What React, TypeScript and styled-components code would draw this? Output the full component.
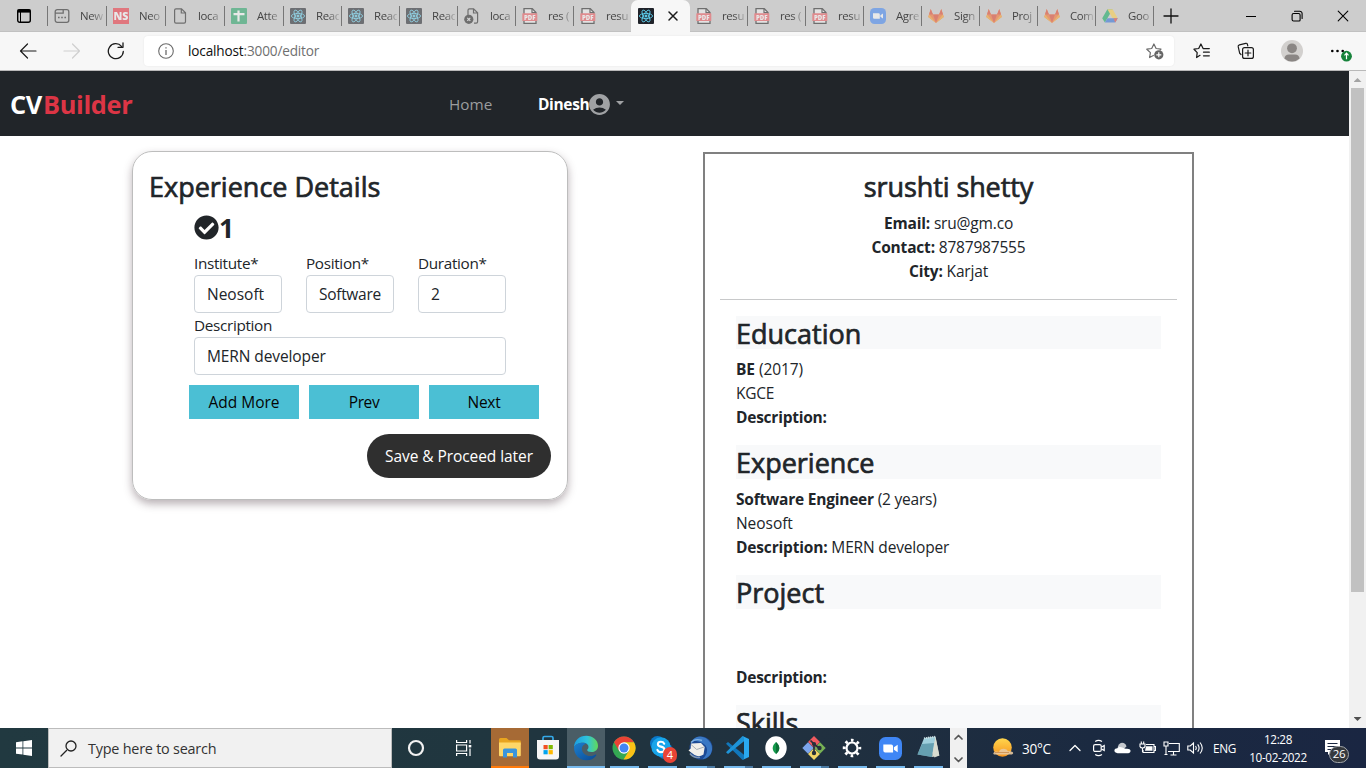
import React from 'react';
import styled, { createGlobalStyle, css } from 'styled-components';
import { MdAccountCircle } from 'react-icons/md';
import { FaCheckCircle } from 'react-icons/fa';

const GlobalStyle = createGlobalStyle`
  *, *::before, *::after { box-sizing: border-box; }
  html, body { margin: 0; background: #fff; }
  body { font-family: "Open Sans", "Noto Sans", sans-serif; color: #212529; overflow: hidden; }
  svg { display: block; flex: none; }
`;

/* ---------- window frame ---------- */

const Screen = styled.div`
  width: 1366px;
  height: 768px;
  display: flex;
  flex-direction: column;
  overflow: hidden;
`;

const TabStrip = styled.header`
  height: 32px;
  flex: none;
  display: flex;
  background: #cdcdcd;
  box-shadow: inset 0 -1px 0 #c1c1c1;
`;

const TabActions = styled.div`
  width: 48px;
  height: 20px;
  margin-top: 6px;
  padding: 2px 0 0 16px;
  border-right: 1px solid #767676;
`;

const Tab = styled.div<{ $width: number; $last?: boolean }>`
  width: ${p => p.$width}px;
  height: 20px;
  margin-top: 6px;
  padding: 2px 0 0 6px;
  display: flex;
  gap: 10px;
  border-right: 1px solid ${p => (p.$last ? 'transparent' : '#767676')};
`;

const TabIcon = styled.span`
  width: 16px;
  height: 16px;
  flex: none;
  opacity: 0.55;
`;

const TabTitle = styled.span`
  width: 23px;
  overflow: hidden;
  white-space: nowrap;
  font-size: 11.4px;
  line-height: 16px;
  letter-spacing: -0.35px;
  color: #454545;
  mask-image: linear-gradient(90deg, #000 50%, rgba(0, 0, 0, 0.2) 100%);
`;

const ActiveTab = styled.div`
  width: 59px;
  height: 32px;
  display: flex;
  align-items: center;
  gap: 13px;
  padding: 0 0 0 7px;
  background: #f7f7f7;
  border-radius: 7px 7px 0 0;
`;

const NewTab = styled.div`
  padding: 8px 0 0 9px;
`;

const WindowButtons = styled.div`
  margin-left: auto;
  display: flex;
  align-items: center;
`;

const WindowButton = styled.div`
  width: 46px;
  height: 32px;
  display: grid;
  place-items: center;
`;

const Toolbar = styled.div`
  height: 39px;
  flex: none;
  display: flex;
  align-items: center;
  padding: 0 14px 0 16px;
  background: #f7f7f7;
  border-bottom: 1px solid #b9b9b9;
`;

const NavButton = styled.div`
  width: 44px;
  height: 32px;
  padding-left: 3px;
  display: flex;
  align-items: center;
`;

const AddressBar = styled.div`
  width: 1030px;
  height: 30px;
  margin-left: -4px;
  padding: 0 10px 0 14px;
  display: flex;
  align-items: center;
  background: #fff;
  border-radius: 4px;
  box-shadow: 0 0 2px rgba(0, 0, 0, 0.08);
`;

const Url = styled.span`
  flex: 1;
  margin-left: 14px;
  font-size: 13.6px;
  line-height: 20px;
  letter-spacing: -0.16px;
  color: #6f6f6f;
`;

const Host = styled.span`
  color: #101010;
`;

const ToolbarActions = styled.div`
  flex: 1;
  display: flex;
  align-items: center;
  justify-content: space-between;
  padding-left: 19px;
`;

/* ---------- page ---------- */

const Viewport = styled.div`
  height: 657px;
  flex: none;
  display: flex;
  overflow: hidden;
`;

const Page = styled.div`
  width: 1349px;
  overflow: hidden;
`;

const Navbar = styled.nav`
  height: 65px;
  display: flex;
  align-items: center;
  padding: 1px 0 0 10px;
  background: #212529;
`;

const Brand = styled.div`
  width: 439px;
  font-size: 25.4px;
  font-weight: 700;
  line-height: 36px;
  letter-spacing: -0.35px;
  color: #fff;
`;

const BrandAccent = styled.span`
  margin-left: 1px;
  color: #dc3545;
`;

const NavLink = styled.a`
  width: 89px;
  font-size: 15.3px;
  line-height: 24px;
  color: #9b9d9e;
`;

const UserMenu = styled.div`
  display: flex;
  align-items: center;
  color: #a0a2a4;
`;

const UserName = styled.b`
  width: 49px;
  white-space: nowrap;
  font-size: 15.5px;
  line-height: 24px;
  letter-spacing: -0.35px;
  color: #fff;
`;

const Caret = styled.i`
  margin: -2px 0 0 4px;
  border: 4.5px solid transparent;
  border-top-color: currentColor;
  border-bottom: 0;
`;

const Columns = styled.main`
  display: flex;
  align-items: flex-start;
  padding: 15px 0 0 132px;
`;

const Card = styled.section`
  width: 436px;
  height: 349px;
  padding: 18px 16px 0;
  border: 1px solid #bdbdbd;
  border-radius: 20px;
  box-shadow: 0 4px 9px rgba(70, 50, 60, 0.38);
`;

const heading = css`
  margin: 0 0 8px;
  font-size: 27px;
  font-weight: 400;
  line-height: 33.6px;
  white-space: nowrap;
  -webkit-text-stroke: 0.7px currentColor;
`;

const Title = styled.h2`
  ${heading}
  margin-bottom: 7px;
`;

const FormBody = styled.div`
  margin: 0 45px;
`;

const StepRow = styled.div`
  height: 34px;
  display: flex;
  align-items: center;
  margin-bottom: 6px;
`;

const StepNumber = styled.b`
  font-size: 26.5px;
  line-height: 34px;
`;

const FieldRow = styled.div`
  display: grid;
  grid-template-columns: repeat(3, 88px);
  column-gap: 24px;
`;

const Field = styled.label`
  display: block;
  font-size: 15.3px;
  line-height: 24px;
  letter-spacing: -0.33px;
`;

const Input = styled.div<{ $spacing?: number }>`
  height: 38px;
  padding: 0 12px;
  border: 1px solid #ced4da;
  border-radius: 4px;
  font-size: 15.5px;
  line-height: 37px;
  letter-spacing: ${p => p.$spacing ?? -0.1}px;
  overflow: hidden;
  white-space: nowrap;
`;

const ButtonRow = styled.div`
  display: flex;
  gap: 10px;
  margin: 10px 0 0 40px;
`;

const StepButton = styled.button<{ $spacing?: number }>`
  width: 110px;
  height: 34px;
  padding: 0;
  border: 0;
  background: #4bbfd4;
  font: 400 15.5px/34px "Open Sans", "Noto Sans", sans-serif;
  letter-spacing: ${p => p.$spacing ?? 0}px;
  color: #050505;
`;

const SaveButton = styled.button`
  display: block;
  width: 184px;
  height: 44px;
  margin: 15px 0 0 auto;
  padding: 0;
  border: 0;
  border-radius: 22px;
  background: #2f2f2f;
  font: 400 15.5px/44px "Open Sans", "Noto Sans", sans-serif;
  letter-spacing: -0.07px;
  color: #fff;
`;

const Resume = styled.article`
  width: 491px;
  height: 900px;
  margin: 1px 0 0 135px;
  padding: 16px 15px;
  border: 2px solid #808080;
`;

const Person = styled.div`
  padding-bottom: 16px;
  border-bottom: 1px solid #c8c9ca;
  text-align: center;
`;

const PersonName = styled.h2`
  ${heading}
  margin-bottom: 7.2px;
  letter-spacing: -0.1px;
`;

const Line = styled.div<{ $spacing?: number }>`
  height: 24px;
  font-size: 15.5px;
  line-height: 24px;
  letter-spacing: ${p => p.$spacing ?? -0.17}px;
  white-space: nowrap;
`;

const Section = styled.section`
  margin: 16px 16px 0;
`;

const SectionTitle = styled.h2`
  ${heading}
  background: #f8f9fa;
  line-height: 36px;
  height: 33.6px;
`;

const Scrollbar = styled.div`
  width: 17px;
  height: 657px;
  display: flex;
  flex-direction: column;
  align-items: center;
  background: #f1f1f1;
`;

const Thumb = styled.div`
  width: 13px;
  height: 504px;
  margin-bottom: auto;
  background: #c1c1c1;
`;

const ScrollArrow = styled.i<{ $down?: boolean }>`
  width: 8px;
  height: 4px;
  margin: ${p => (p.$down ? '0 0 7px' : '7px 0 6px')};
  clip-path: ${p => (p.$down ? 'polygon(0 0, 100% 0, 50% 100%)' : 'polygon(50% 0, 100% 100%, 0 100%)')};
  background: ${p => (p.$down ? '#505050' : '#a3a3a3')};
`;

/* ---------- taskbar ---------- */

const Taskbar = styled.footer`
  height: 40px;
  flex: none;
  display: flex;
  background: linear-gradient(90deg, #213940 0%, #20363f 35%, #20303f 60%, #1b2a41 80%, #1a2642 100%);
  color: #fff;
`;

const SystemButton = styled.div`
  width: 48px;
  display: grid;
  place-items: center;
`;

const SearchBox = styled.div`
  width: 344px;
  display: flex;
  align-items: center;
  gap: 11px;
  padding-left: 11px;
  background: #f1f1f1;
  border: 1px solid #bcbcbc;
  font-size: 14.4px;
  letter-spacing: -0.22px;
  color: #333;
`;

const Apps = styled.div`
  display: flex;
  padding: 0 3px;
`;

const appTones = {
  idle: 'transparent',
  orange: '#a66a35',
  light: '#4a5d66',
};

const AppButton = styled.div<{ $tone?: keyof typeof appTones; $line?: string; $stacked?: boolean }>`
  position: relative;
  width: 38px;
  display: grid;
  place-items: center;
  background: ${p => appTones[p.$tone ?? 'idle']};
  &::after {
    content: "";
    position: absolute;
    left: ${p => (p.$tone ? 0 : 5)}px;
    right: ${p => (p.$tone ? 0 : 4)}px;
    bottom: 0;
    height: 2px;
    background: ${p => (p.$stacked ? 'linear-gradient(90deg, #76b9ed 71%, #4b7aa3 71%)' : p.$line ?? '#76b9ed')};
  }
`;

const CountBadge = styled.span`
  position: absolute;
  right: 4px;
  bottom: 5px;
  width: 14px;
  height: 16px;
  border-radius: 8px;
  background: #ea4335;
  font-size: 11px;
  line-height: 15px;
  text-align: center;
`;

const Overflow = styled.div`
  width: 17px;
  display: flex;
  flex-direction: column;
  justify-content: space-between;
  align-items: center;
  padding: 6px 0 5px;
  background: #f0f0f0;
`;

const Tray = styled.div`
  flex: 1;
  display: flex;
  align-items: center;
  padding-left: 25px;
`;

const TrayItem = styled.div<{ $width: number }>`
  width: ${p => p.$width}px;
  flex: none;
`;

const TrayText = styled.div<{ $width: number; $size: number; $spacing: number }>`
  width: ${p => p.$width}px;
  flex: none;
  font-size: ${p => p.$size}px;
  letter-spacing: ${p => p.$spacing}px;
  white-space: nowrap;
`;

const Clock = styled.div`
  width: 58px;
  flex: none;
  display: flex;
  flex-direction: column;
  align-items: center;
  font-size: 11.7px;
  line-height: 18px;
  letter-spacing: -0.35px;
  white-space: nowrap;
`;

const Notifications = styled.div`
  position: relative;
  margin: -1px 0 0 17px;
`;

const NotificationCount = styled.span`
  position: absolute;
  left: 5px;
  top: 6px;
  width: 20px;
  height: 17px;
  border: 1px solid #a2a6aa;
  border-radius: 9px;
  background: #35393e;
  font-size: 11.5px;
  line-height: 14px;
  letter-spacing: -0.3px;
  text-align: center;
`;

/* ---------- browser icons ---------- */

const Stroke = ({ w = 16, h = w, box, d, color = '#1b1b1b', sw = 1.2 }: {
  w?: number; h?: number; box?: string; d: string; color?: string; sw?: number;
}) => (
  <svg width={w} height={h} viewBox={box ?? `0 0 ${w} ${h}`} fill="none" stroke={color} strokeWidth={sw} strokeLinecap="round" strokeLinejoin="round">
    <path d={d} />
  </svg>
);

const TabActionsIcon = () => (
  <svg width="16" height="16" fill="none" stroke="#000" strokeWidth="1.4">
    <rect x="1.7" y="1.7" width="12.6" height="12.6" rx="2" />
    <path d="M4.500 4v10" strokeWidth="1" />
    <path d="M1.500 3h13" strokeWidth="3.2" />
  </svg>
);

const NewPageIcon = () => (
  <svg width="16" height="16" fill="none" stroke="#222" strokeWidth="1.3">
    <path d="M3.2 1.7h9.6a2 2 0 0 1 2 2v8.6a2 2 0 0 1-2 2H3.2a2 2 0 0 1-2-2V3.7a2 2 0 0 1 2-2ZM1.5 5.2H9.2V2" />
    <path d="M4 9.5h1.600M7.200 9.5h1.600M10.400 9.5H12" strokeWidth="1.6" />
  </svg>
);

const NsIcon = () => (
  <svg width="16" height="16">
    <rect width="16" height="16" fill="#f0323f" />
    <text x="8" y="12" fill="#fff" fontSize="10.5" fontWeight="800" fontFamily="Open Sans" textAnchor="middle">NS</text>
  </svg>
);

const FileIcon = ({ blocked }: { blocked?: boolean }) => (
  <svg width="16" height="16" fill="none" stroke="#222" strokeWidth="1.2">
    <path d={blocked ? 'M4 7V2.2Q4 .8 5.400.8h4.200l4 4v9q0 1.400-1.400 1.400H10M9.500 1v4h4' : 'M2.600 2.200Q2.600.8 4 .8h5.500l4 4v9q0 1.400-1.400 1.400H4q-1.400 0-1.400-1.400ZM9.300 1v4h4'} />
    {blocked && <circle cx="4.800" cy="11.300" r="4.600" fill="#222" stroke="none" />}
    {blocked && <path d="m3.300 9.800 3 3m0-3-3 3" stroke="#ddd" />}
  </svg>
);

const SheetIcon = () => (
  <svg width="16" height="16">
    <rect width="16" height="16" rx="1" fill="#23a566" />
    <path d="M2.500 6.200h11M7.500 2.500v11" stroke="#fff" strokeWidth="2.200" />
  </svg>
);

const ReactIcon = () => (
  <svg width="16" height="16" fill="none" stroke="#5fd3f3" strokeWidth=".85">
    <rect width="16" height="16" rx="1" fill="#20232a" stroke="none" />
    <ellipse cx="8" cy="8" rx="6.600" ry="2.600" />
    <ellipse cx="8" cy="8" rx="6.600" ry="2.600" transform="rotate(60 8 8)" />
    <ellipse cx="8" cy="8" rx="6.600" ry="2.600" transform="rotate(120 8 8)" />
    <circle cx="8" cy="8" r="1.100" fill="#5fd3f3" />
  </svg>
);

const PdfIcon = () => (
  <svg width="16" height="16">
    <path d="M2 .7h8.300L14 4.400v11H2Z" fill="#f5f5f5" stroke="#222" strokeWidth="1.300" />
    <path d="M10 1v3.700h4" fill="none" stroke="#222" strokeWidth="1.200" />
    <rect x=".3" y="5.300" width="15" height="7.800" rx=".5" fill="#f0565b" />
    <text x="7.800" y="11.500" fill="#fff" fontSize="6" fontWeight="800" fontFamily="Open Sans" textAnchor="middle">PDF</text>
  </svg>
);

const ZoomIcon = ({ size = 16 }: { size?: number }) => (
  <svg width={size} height={size} viewBox="0 0 16 16">
    <rect width="16" height="16" rx="4.500" fill="#3f86f5" />
    <path d="M3 5.300h5.500q1.300 0 1.300 1.300v4.100H4.300Q3 10.700 3 9.400ZM10.400 7.200l2.600-1.800v5.200l-2.600-1.800Z" fill="#fff" />
  </svg>
);

const GitlabIcon = () => (
  <svg width="16" height="16">
    <path d="M2.700 1 5 6.500h6L13.300 1l2.500 7.900L8 15 .2 8.900Z" fill="#fc6d26" />
    <path d="M5 6.500h6L8 15Z" fill="#e24329" />
    <path d="m.2 8.900.9-2.500L8 15ZM15.800 8.900l-.9-2.500L8 15Z" fill="#fca326" />
    <path d="M2.700 1 5 6.500H1ZM13.300 1 11 6.500h4Z" fill="#e24329" />
  </svg>
);

const DriveIcon = () => (
  <svg width="16" height="16">
    <path d="M5.400 1.200h5.200L8 5.700 2.900 14.600.2 10.200Z" fill="#0ba960" />
    <path d="M5.400 1.200h5.200l5.200 9h-5.200Z" fill="#ffcf48" />
    <path d="M5.400 10.200h10.400l-2.600 4.400H2.900Z" fill="#2d6fdd" />
    <path d="m11.500 10.200h4.300l-2.600 4.400Z" fill="#ea4335" />
  </svg>
);

const FavoriteIcon = () => (
  <svg width="18" height="18" fill="none" stroke="#6b6b6b" strokeWidth="1.200" strokeLinejoin="round">
    <path d="m7.800 13.300-4.200 2.200.8-4.900L.8 7.200l4.900-.7L7.900 2l2.200 4.500 4.900.7-1.200 1.200" />
    <circle cx="12.800" cy="12.800" r="4.600" fill="#666" stroke="none" />
    <path d="M12.800 10.300v5M10.300 12.800h5" stroke="#fff" />
  </svg>
);

const FavoritesIcon = () => (
  <svg width="18" height="18" fill="none" stroke="#1b1b1b" strokeWidth="1.250" strokeLinejoin="round" strokeLinecap="round">
    <path d="m7 13.300-3.400 2.200.6-4.900L1 7.200l4.700-.7L7.900 2l2.200 4.500h6.200M10.500 10.200h5.800M10.500 13.800h5.800" />
  </svg>
);

const CollectionsIcon = () => (
  <svg width="18" height="18" fill="none" stroke="#1b1b1b" strokeWidth="1.200" strokeLinejoin="round" strokeLinecap="round">
    <path d="M4 12.500 2.700 11.300 1.200 4.700Q.9 3.200 2.400 2.800L8.700 1.300q1.300-.3 1.700 1l.4 1.600" />
    <rect x="5.600" y="5.600" width="10.800" height="10.800" rx="2" />
    <path d="M11 8.200v5.600M8.200 11h5.600" />
  </svg>
);

const ProfileIcon = () => (
  <svg width="23" height="22">
    <circle cx="11" cy="11" r="11" fill="#d2d0ce" />
    <circle cx="11" cy="8.300" r="4.900" fill="#8a8684" />
    <path d="M3.400 18.500Q4 14.600 8 14.600h6q4 0 4.600 3.900A11 11 0 0 1 3.400 18.500Z" fill="#8a8684" />
  </svg>
);

const MenuIcon = () => (
  <svg width="22" height="24">
    <circle cx="2.300" cy="12" r="1.300" /><circle cx="7.500" cy="12" r="1.300" /><circle cx="12.700" cy="12" r="1.300" />
    <circle cx="16.500" cy="17.200" r="5.400" fill="#17833b" />
    <path d="M16.500 20.300v-6m-2 2 2-2.100 2 2.100" fill="none" stroke="#fff" strokeWidth="1.200" />
  </svg>
);

const InfoIcon = () => (
  <svg width="16" height="16" fill="none" stroke="#6b6b6b" strokeWidth="1.100">
    <circle cx="8" cy="8" r="7.300" />
    <path d="M8 7v5M8 4.200v1.300" strokeWidth="1.300" />
  </svg>
);

/* ---------- taskbar icons ---------- */

const WindowsIcon = () => (
  <svg width="16" height="16" fill="#fff">
    <path d="M0 2.200 6.500 1.300v6.200H0ZM7.300 1.200 16 0v7.500H7.300ZM0 8.400h6.500v6.200L0 13.700ZM7.300 8.400H16V16l-8.700-1.300Z" />
  </svg>
);

const TaskViewIcon = () => (
  <svg width="18" height="18" fill="none" stroke="#fff" strokeWidth="1.200">
    <path d="M1.600 1v2.500h10V1M1.600 17v-2.500h10V17M1.600 6h10v6h-10ZM15 1v3.600M15 9.500V17" />
    <path d="M13.700 6h2.600v2.400h-2.600Z" fill="#fff" stroke="none" />
  </svg>
);

const ExplorerIcon = () => (
  <svg width="24" height="24">
    <path d="M1 3.500Q1 2 2.500 2h6L11 4.300h10.500q1.300 0 1.300 1.300V9H1Z" fill="#e8a41f" />
    <path d="M1 6.500h21.800v12.700q0 1-1 1H2q-1 0-1-1Z" fill="#ffd768" />
    <path d="M5 21.500V14q0-1.500 1.500-1.500h11Q19 12.500 19 14v7.500h-4V17H9v4.500Z" fill="#3b95dc" />
  </svg>
);

const StoreIcon = () => (
  <svg width="24" height="26">
    <path d="M7 6V3q0-1.500 1.500-1.500h7Q17 1.500 17 3v3" fill="none" stroke="#35a9e8" strokeWidth="1.700" />
    <path d="M1 5h22v16.500q0 3-3 3H4q-3 0-3-3Z" fill="#f6f6f6" />
    <path d="M7.500 10h4.200v4.200H7.500Z" fill="#f25022" /><path d="M12.600 10h4.200v4.200h-4.200Z" fill="#7fba00" />
    <path d="M7.500 15.100h4.200v4.200H7.500Z" fill="#00a4ef" /><path d="M12.600 15.100h4.200v4.200h-4.200Z" fill="#ffb900" />
  </svg>
);

const EdgeIcon = () => (
  <svg width="26" height="26" viewBox="0 0 26 26">
    <defs>
      <linearGradient id="edgeTop" x1="0" x2="1"><stop stopColor="#1b9de2" /><stop offset=".55" stopColor="#2fc3dc" /><stop offset="1" stopColor="#62d957" /></linearGradient>
      <linearGradient id="edgeBottom" x1="0" y1="0" x2="1" y2="1"><stop stopColor="#1b80cf" /><stop offset="1" stopColor="#0c4a94" /></linearGradient>
    </defs>
    <path d="M1 12.500C1 5.500 6.500.8 13.300.8 20 .8 25 5.300 25 10.800c0 4-3 6.300-6.500 6.300-2.800 0-4.300-1-4.300-2 0-.7 1.300-1.200 1.300-3.100 0-2.200-2-4.200-5.500-4.200C5.500 7.800 2 10 1 12.500Z" fill="url(#edgeTop)" />
    <path d="M1 12.500C2 9.500 5.500 7.800 9.300 7.800c1.700 0 3 .4 4 1-3.500.7-4.800 3.600-4.300 6.200.7 3.600 4.300 6 8 6 2 0 3.700-.6 5-1.300 1-.5 1.600.3 1.100 1A12 12 0 0 1 13 25.200C6 25.200 1 19.500 1 12.500Z" fill="url(#edgeBottom)" />
  </svg>
);

const ChromeIcon = () => (
  <svg width="24" height="24" viewBox="0 0 24 24">
    <circle cx="12" cy="12" r="11.500" fill="#34a853" />
    <path d="M2 6.300A11.500 11.500 0 0 1 22 6.300H12L7 14.800Z" fill="#ea4335" />
    <path d="M22 6.300A11.500 11.500 0 0 1 11.500 23.500L17 14.800 12 6.300Z" fill="#fbc116" />
    <circle cx="12" cy="12" r="5.700" fill="#fff" /><circle cx="12" cy="12" r="4.500" fill="#4285f4" />
  </svg>
);

const SkypeIcon = () => (
  <svg width="26" height="26">
    <circle cx="8.500" cy="8.500" r="7.500" fill="#0a78c8" /><circle cx="16" cy="16" r="8" fill="#0a78c8" />
    <circle cx="12" cy="12" r="9.700" fill="#18a5ea" />
    <path d="M15.200 8.700q-1-1.900-3.300-1.900-3 0-3 2.400 0 1.800 3 2.400 3.500.7 3.500 2.900 0 2.600-3.500 2.600-2.600 0-3.500-2.200" fill="none" stroke="#fff" strokeWidth="2.100" strokeLinecap="round" />
  </svg>
);

const ThunderbirdIcon = () => (
  <svg width="26" height="26">
    <circle cx="14" cy="13" r="11.500" fill="#1d4a94" />
    <path d="M5 5.500Q11-1 19 3.300 25.500 7.500 25 15q-1.500 8-9.500 9.300 5-5 4.500-10Q19 6.500 5 5.500Z" fill="#3a78c4" />
    <path d="M4 8.500 14 8l3.700 4-1.200 7.500q-4.500 3-9 .5L1.500 15.500l2.200-2Z" fill="#f1efea" />
    <path d="m4 9.500 5.700 5 7.300-2.500" fill="none" stroke="#a9b0b5" />
    <path d="M3 18.500q4 5 10 3.800" fill="none" stroke="#7e95b3" strokeWidth="1.600" />
    <path d="M4 7.500Q8 3 15 5.500" fill="none" stroke="#7fb2e4" strokeWidth="1.400" />
  </svg>
);

const CodeIcon = () => (
  <svg width="26" height="26">
    <path d="m1 8.800 2-1.700L19 19.800v4.500l-1.500.7Z" fill="#1177bb" />
    <path d="M1 17.200 17.500 1l1.500.8v4.500L3 18.900Z" fill="#1e94d8" />
    <path d="m17.500 1 6.500 3v18l-6.500 3q1.500-.6 1.500-2V3q0-1.300-1.500-2Z" fill="#2aa9f0" />
  </svg>
);

const MongoIcon = () => (
  <svg width="24" height="26">
    <ellipse cx="12" cy="13" rx="10.700" ry="11.700" fill="#fff" />
    <path d="M12 7c5 4.500 3.800 9 0 12-3.800-3-5-7.500 0-12Z" fill="#13994a" />
    <path d="M12 7V20.500c0-1 .2-1 0-1.500 3.800-3 5-7.500 0-12Z" fill="#0c6f37" />
  </svg>
);

const GitIcon = () => (
  <svg width="26" height="26" viewBox="0 0 26 26">
    <path d="m13 1 6 6-6 6-6-6Z" fill="#f05a5f" /><path d="m7 7.300 5.700 5.700L7 18.700 1.300 13Z" fill="#7ca5ec" />
    <path d="m13 13 6 6-6 6-6-6Z" fill="#f2d566" /><path d="m19 7.300 5.700 5.700-5.700 5.700-5.700-5.700Z" fill="#78b255" />
    <path d="M9.500 5.500 13 9v9M13 9l5 4" fill="none" stroke="#27303a" strokeWidth="1.700" />
    <circle cx="13" cy="9" r="2.100" fill="#27303a" /><circle cx="13" cy="18" r="2.200" fill="#27303a" /><circle cx="18.500" cy="13" r="2.200" fill="#27303a" />
  </svg>
);

const GearIcon = () => (
  <svg width="20" height="20" viewBox="0 0 20 20" fill="none" stroke="#fff">
    <circle cx="10" cy="10" r="5.500" strokeWidth="2.200" />
    <circle cx="10" cy="10" r="7.800" strokeWidth="2.900" strokeDasharray="2.600 3.526" strokeDashoffset="1.300" />
  </svg>
);

const NotepadIcon = () => (
  <svg width="26" height="26">
    <path d="m9.500 3 11-1.500 3.800 19-4.800 2Z" fill="#cfd2c6" />
    <path d="m9 3.300 11.500-1.600L17 22 2.500 19.500Z" fill="#9fcfdc" />
    <path d="m7 9 12-1L17 22 2.500 19.500Z" fill="#4f8b9e" opacity=".7" />
    <path d="m20.500 2 3.800 18.500L17 22Z" fill="#d9dcd0" />
    <path d="m9 3.300 11.500-1.600" stroke="#c8dfe5" strokeWidth="2" strokeDasharray="1 1" />
  </svg>
);

const WeatherIcon = () => (
  <svg width="22" height="22">
    <defs><linearGradient id="sun" x2="0" y2="1"><stop stopColor="#ffd64d" /><stop offset="1" stopColor="#f7941e" /></linearGradient></defs>
    <circle cx="10.500" cy="10.500" r="9.300" fill="url(#sun)" />
    <path d="M2 17.500q-2-1.500 1.500-3 2.500-.2 3.500.5 1-3.500 5-3.300 3 .2 4 2.600 3-.3 4.600.7 1.400 1.700-.8 2.500Z" fill="#e9c9a0" opacity=".9" />
    <path d="M3 15.500h14" stroke="#c98c4b" strokeWidth=".8" />
  </svg>
);

const MeetNowIcon = () => (
  <svg width="14" height="18" fill="none" stroke="#fff" strokeWidth="1.200">
    <rect x="1.600" y="5.600" width="7.600" height="6.800" rx="1.500" />
    <path d="m9.500 8 2.700-1.400v4.800L9.500 10M3.200 2.500Q6.500.2 10 2.500M3.200 15.500q3.300 2.300 6.800 0" />
  </svg>
);

const CloudIcon = () => (
  <svg width="17" height="12">
    <path d="M3.500 7Q4 1 8 .8q3.500 0 4.500 3.700l-7 6Z" fill="#c5c9ce" />
    <path d="M3.600 11.200Q.4 11 .4 8.600.6 6.200 3.500 6.200q1.700-2.200 4.600-.6l3.500 1.200q4.600-.6 5 2.200-.1 2-2.200 2.200Z" fill="#fff" />
  </svg>
);

const BatteryIcon = () => (
  <svg width="17" height="14" fill="none" stroke="#fff" strokeWidth="1.100">
    <path d="M7 3.500h8v8H4V9M15.500 5.500h1v4h-1" /><path d="M7 5.200h6.500v4.500H6Z" fill="#fff" stroke="none" />
    <path d="M1 3h5v2.500Q5.500 7 3.500 7 1.500 7 1 5.500ZM2.300 3V.5M4.700 3V.5M3.500 7v4" />
  </svg>
);

const NetworkIcon = () => (
  <svg width="17" height="15" fill="none" stroke="#fff" strokeWidth="1.100">
    <path d="M6 2.500h10.300v8H5M10.500 10.500v3.500M7.500 14h6M1 1h4v4H1ZM3 5v8.500M1.500 13.500h3" />
  </svg>
);

const VolumeIcon = () => (
  <svg width="17" height="14" fill="none" stroke="#fff" strokeWidth="1.100">
    <path d="M.8 5h2.400L6.500 2v10L3.200 9H.8ZM8.500 5q1.500 2 0 4M10.700 3.300q2.800 3.700 0 7.400M13 1.500q4.500 5.500 0 11" />
  </svg>
);

/* ---------- data ---------- */

const tabs: { icon: React.ReactNode; title: string; width: number; last?: boolean }[] = [
  { icon: <NewPageIcon />, title: 'New', width: 59 },
  { icon: <NsIcon />, title: 'Neo', width: 59 },
  { icon: <FileIcon />, title: 'loca', width: 59 },
  { icon: <SheetIcon />, title: 'Atte', width: 59 },
  { icon: <ReactIcon />, title: 'Reac', width: 58 },
  { icon: <ReactIcon />, title: 'Reac', width: 58 },
  { icon: <ReactIcon />, title: 'Reac', width: 58 },
  { icon: <FileIcon blocked />, title: 'loca', width: 58 },
  { icon: <PdfIcon />, title: 'res (', width: 58 },
  { icon: <PdfIcon />, title: 'resu', width: 57, last: true },
];

const tabsAfter: typeof tabs = [
  { icon: <PdfIcon />, title: 'resu', width: 58 },
  { icon: <PdfIcon />, title: 'res (', width: 58 },
  { icon: <PdfIcon />, title: 'resu', width: 58 },
  { icon: <ZoomIcon />, title: 'Agre', width: 58 },
  { icon: <GitlabIcon />, title: 'Sign', width: 58 },
  { icon: <GitlabIcon />, title: 'Proj', width: 58 },
  { icon: <GitlabIcon />, title: 'Com', width: 58 },
  { icon: <DriveIcon />, title: 'Goo', width: 58 },
];

const renderTab = (t: (typeof tabs)[number], i: number) => (
  <Tab key={i} $width={t.width} $last={t.last}>
    <TabIcon>{t.icon}</TabIcon>
    <TabTitle>{t.title}</TabTitle>
  </Tab>
);

const Browser = () => (
  <>
    <TabStrip>
      <TabActions><TabActionsIcon /></TabActions>
      {tabs.map(renderTab)}
      <ActiveTab>
        <ReactIcon />
        <Stroke w={12} d="m2 2 8 8m0-8-8 8" sw={1.5} />
      </ActiveTab>
      {tabsAfter.map(renderTab)}
      <NewTab><Stroke w={16} d="M8 1v14M1 8h14" sw={1.3} color="#111" /></NewTab>
      <WindowButtons>
        <WindowButton><Stroke w={10} d="M0 5.5h10" sw={1} color="#000" /></WindowButton>
        <WindowButton><Stroke w={12} d="M2.600 3.500h5a1.500 1.500 0 0 1 1.500 1.500v5a1 1 0 0 1-1 1H2.600a1.500 1.500 0 0 1-1.500-1.500V5a1.500 1.500 0 0 1 1.500-1.500ZM3.500 1.200h5.200a2.300 2.300 0 0 1 2.400 2.300v5" sw={1.1} color="#000" /></WindowButton>
        <WindowButton><Stroke w={12} d="m1.200 1.200 9.600 9.600m0-9.600-9.600 9.600" sw={1.1} color="#000" /></WindowButton>
      </WindowButtons>
    </TabStrip>
    <Toolbar>
      <NavButton><Stroke w={18} d="M17 9H2M8.500 2 1.500 9l7 7" sw={1.2} /></NavButton>
      <NavButton><Stroke w={18} d="M1 9h15M9.500 2l7 7-7 7" sw={1.2} color="#cfcfcf" /></NavButton>
      <NavButton><Stroke w={18} d="M16.300 9.500A7.500 7.500 0 1 1 14.500 4.300M16 .8V5.300H11" sw={1.3} /></NavButton>
      <AddressBar>
        <InfoIcon />
        <Url><Host>localhost</Host>:3000/editor</Url>
        <FavoriteIcon />
      </AddressBar>
      <ToolbarActions>
        <FavoritesIcon />
        <CollectionsIcon />
        <ProfileIcon />
        <MenuIcon />
      </ToolbarActions>
    </Toolbar>
  </>
);

const ExperienceForm = () => (
  <Card>
    <Title>Experience Details</Title>
    <FormBody>
      <StepRow><FaCheckCircle size={25} /><StepNumber>1</StepNumber></StepRow>
      <FieldRow>
        <Field>Institute*<Input $spacing={0}>Neosoft</Input></Field>
        <Field>Position*<Input $spacing={-0.3}>Software</Input></Field>
        <Field>Duration*<Input>2</Input></Field>
      </FieldRow>
      <Field>Description<Input>MERN developer</Input></Field>
    </FormBody>
    <ButtonRow>
      <StepButton>Add More</StepButton>
      <StepButton $spacing={-0.4}>Prev</StepButton>
      <StepButton $spacing={-0.25}>Next</StepButton>
    </ButtonRow>
    <SaveButton>Save &amp; Proceed later</SaveButton>
  </Card>
);

const ResumePreview = () => (
  <Resume>
    <Person>
      <PersonName>srushti shetty</PersonName>
      <Line><b>Email:</b> sru@gm.co</Line>
      <Line $spacing={-0.19}><b>Contact:</b> 8787987555</Line>
      <Line><b>City:</b> Karjat</Line>
    </Person>
    <Section>
      <SectionTitle>Education</SectionTitle>
      <Line $spacing={-0.08}><b>BE</b> (2017)</Line>
      <Line $spacing={-0.28}>KGCE</Line>
      <Line $spacing={-0.24}><b>Description:</b></Line>
    </Section>
    <Section>
      <SectionTitle>Experience</SectionTitle>
      <Line $spacing={-0.22}><b>Software Engineer</b> (2 years)</Line>
      <Line $spacing={-0.05}>Neosoft</Line>
      <Line><b>Description:</b> MERN developer</Line>
    </Section>
    <Section>
      <SectionTitle>Project</SectionTitle>
      <Line />
      <Line />
      <Line $spacing={-0.24}><b>Description:</b></Line>
    </Section>
    <Section>
      <SectionTitle>Skills</SectionTitle>
    </Section>
  </Resume>
);

const WindowsTaskbar = () => (
  <Taskbar>
    <SystemButton><WindowsIcon /></SystemButton>
    <SearchBox>
      <Stroke w={17} d="M6.500 10.500 1 16M16 6A5 5 0 1 1 6 6a5 5 0 0 1 10 0Z" sw={1.3} color="#222" />
      <span>Type here to search</span>
    </SearchBox>
    <SystemButton><Stroke w={18} d="M16 9A7 7 0 1 1 2 9a7 7 0 0 1 14 0Z" sw={2.2} color="#f2f2f2" /></SystemButton>
    <SystemButton><TaskViewIcon /></SystemButton>
    <Apps>
      <AppButton $tone="orange" $line="#ff7a0a"><ExplorerIcon /></AppButton>
      <AppButton $line="transparent"><StoreIcon /></AppButton>
      <AppButton $tone="light"><EdgeIcon /></AppButton>
      <AppButton><ChromeIcon /></AppButton>
      <AppButton><SkypeIcon /><CountBadge>4</CountBadge></AppButton>
      <AppButton $stacked><ThunderbirdIcon /></AppButton>
      <AppButton $stacked><CodeIcon /></AppButton>
      <AppButton><MongoIcon /></AppButton>
      <AppButton $stacked><GitIcon /></AppButton>
      <AppButton><GearIcon /></AppButton>
      <AppButton><ZoomIcon size={23} /></AppButton>
      <AppButton><NotepadIcon /></AppButton>
    </Apps>
    <Overflow>
      <Stroke w={9} h={6} d="m1 5 3.500-3.500L8 5" sw={1.7} color="#555" />
      <Stroke w={9} h={6} d="m1 1 3.500 3.500L8 1" sw={1.7} color="#555" />
    </Overflow>
    <Tray>
      <TrayItem $width={30}><WeatherIcon /></TrayItem>
      <TrayText $width={47} $size={13.6} $spacing={-0.25}>30°C</TrayText>
      <TrayItem $width={23}><Stroke w={12} h={8} d="m1 6.500 5-5 5 5" sw={1.3} color="#fff" /></TrayItem>
      <TrayItem $width={22}><MeetNowIcon /></TrayItem>
      <TrayItem $width={25}><CloudIcon /></TrayItem>
      <TrayItem $width={24}><BatteryIcon /></TrayItem>
      <TrayItem $width={24}><NetworkIcon /></TrayItem>
      <TrayItem $width={26}><VolumeIcon /></TrayItem>
      <TrayText $width={36} $size={11.8} $spacing={-0.3}>ENG</TrayText>
      <Clock><span>12:28</span><span>10-02-2022</span></Clock>
      <Notifications>
        <svg width="17" height="15" fill="#fff">
          <path d="M1 0h15v12H7l-3 3v-3H1Z" />
          <path d="M3.5 3.500h10M3.500 6.500h10M3.500 9.500h7" stroke="#1b2841" />
        </svg>
        <NotificationCount>26</NotificationCount>
      </Notifications>
    </Tray>
  </Taskbar>
);

export default function App() {
  return (
    <Screen>
      <GlobalStyle />
      <Browser />
      <Viewport>
        <Page>
          <Navbar>
            <Brand>CV<BrandAccent>Builder</BrandAccent></Brand>
            <NavLink>Home</NavLink>
            <UserMenu>
              <UserName>Dinesh</UserName>
              <MdAccountCircle size={25} />
              <Caret />
            </UserMenu>
          </Navbar>
          <Columns>
            <ExperienceForm />
            <ResumePreview />
          </Columns>
        </Page>
        <Scrollbar>
          <ScrollArrow />
          <Thumb />
          <ScrollArrow $down />
        </Scrollbar>
      </Viewport>
      <WindowsTaskbar />
    </Screen>
  );
}
